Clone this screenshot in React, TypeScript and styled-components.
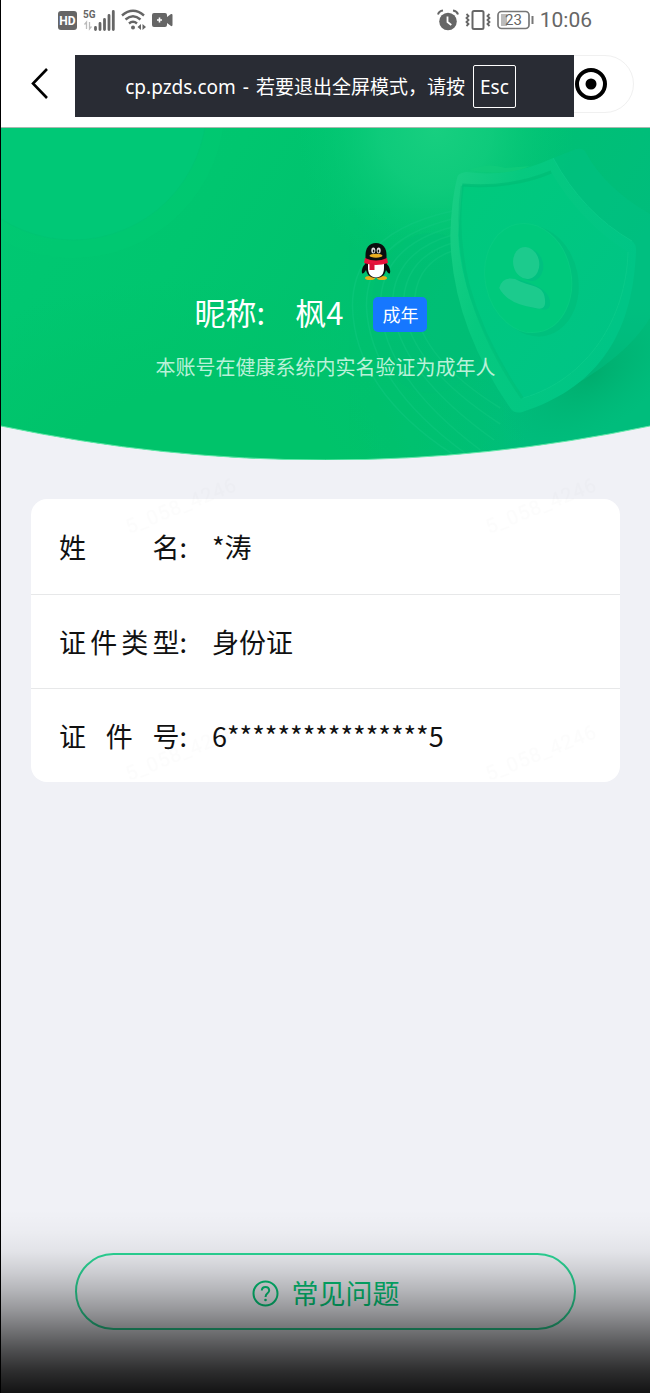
import React from "react";
import styled, { createGlobalStyle } from "styled-components";

const GlobalStyle = createGlobalStyle`
  * { box-sizing: border-box; }
  body {
    margin: 0;
    background: #f0f1f6;
    font-family: "Noto Sans CJK SC", sans-serif;
    color: #111;
  }
  button { font-family: inherit; }
`;

const Page = styled.div`
  position: relative;
  display: flex;
  flex-direction: column;
  min-height: 100vh;
  border-left: 1px solid #000;
  background: #f0f1f6;
`;

const StatusBar = styled.div`
  display: flex;
  justify-content: space-between;
  align-items: center;
  height: 40px;
  padding: 0 58px 0 57px;
  background: #fff;
  color: #666;
`;

const StatusGroup = styled.div`
  display: flex;
  align-items: center;
  gap: 6px;
`;

const Clock = styled.time`
  font: 400 21px/24px Roboto, sans-serif;
`;

const NavBar = styled.header`
  position: relative;
  display: flex;
  justify-content: space-between;
  align-items: center;
  height: 88px;
  padding: 1px 16px 0 24px;
  background: #fff;
  border-bottom: 1px solid #a9b8b0;
`;

const IconButton = styled.button`
  display: flex;
  align-items: center;
  justify-content: center;
  padding: 0;
  border: 0;
  background: none;
  cursor: pointer;
`;

const Capsule = styled.div`
  display: grid;
  grid-template-columns: 1fr 1fr;
  width: 172px;
  height: 58px;
  border: 1px solid #f0f0f0;
  border-radius: 29px;
`;

const FullscreenNotice = styled.div`
  position: absolute;
  top: 15px;
  left: 74px;
  right: 76px;
  display: flex;
  align-items: center;
  justify-content: center;
  gap: 8px;
  height: 62px;
  padding-right: 8px;
  background: #292c34;
  color: #fff;
  font: 400 19px/28px "Noto Sans", "Noto Sans CJK SC", sans-serif;
  white-space: nowrap;
`;

const NoticeText = styled.span`
  display: flex;
  gap: 7px;
  padding-top: 2px;
`;

const Key = styled.kbd`
  padding: 7px 6px 6px;
  border: 1px solid #fff;
  border-radius: 2px;
  font: inherit;
`;

const Hero = styled.section`
  position: relative;
  height: 332px;
`;

const HeroArt = styled.svg`
  position: absolute;
  inset: 0;
  width: 100%;
  height: 100%;
`;

const HeroContent = styled.div`
  position: relative;
  display: flex;
  flex-direction: column;
  align-items: center;
  padding-top: 114px;
  color: #fff;
`;

const Avatar = styled.div`
  height: 48px;
  padding-left: 100px;
`;

const NicknameRow = styled.div`
  display: flex;
  align-items: center;
  gap: 30px;
  height: 48px;
  padding-right: 29px;
`;

const Nickname = styled.h1`
  display: flex;
  gap: 30px;
  margin: 0;
  padding-bottom: 4px;
  font-size: 31px;
  font-weight: 400;
  line-height: 44px;
`;

const Badge = styled.span`
  padding: 0 9px;
  border-radius: 5px;
  background: #1677ff;
  font-size: 18px;
  line-height: 35px;
`;

const Description = styled.p`
  margin: 14px 0 0;
  color: #b9f1d8;
  font-size: 20px;
  line-height: 30px;
`;

const InfoCard = styled.dl`
  margin: 39px 30px 40px;
  padding-top: 1px;
  border-radius: 16px;
  background: #fff;
`;

const InfoRow = styled.div`
  display: flex;
  align-items: center;
  height: 94px;
  padding: 0 28px;
  font-size: 27px;
  line-height: 40px;

  & + & {
    border-top: 1px solid #e7e8e9;
  }
`;

const InfoLabel = styled.dt`
  display: flex;
  width: 128px;
`;

const Spread = styled.span`
  display: flex;
  flex: 1;
  justify-content: space-between;
`;

const InfoValue = styled.dd`
  margin: 0 0 0 25px;
`;

const Footer = styled.footer`
  margin-top: auto;
  padding: 0 74px 63px;
`;

const HelpButton = styled.button`
  display: flex;
  align-items: center;
  justify-content: center;
  gap: 13px;
  width: 100%;
  height: 77px;
  padding: 3px 0 0;
  border: 2px solid #2bd897;
  border-radius: 39px;
  background: none;
  color: #04c678;
  font-size: 27px;
  line-height: 40px;
  cursor: pointer;
`;

const Shade = styled.div`
  position: absolute;
  left: 0;
  right: 0;
  bottom: 0;
  height: 183px;
  pointer-events: none;
  background: linear-gradient(
    to bottom,
    rgba(0, 0, 0, 0) 0%,
    rgba(0, 0, 0, 0.02) 12%,
    rgba(0, 0, 0, 0.06) 23%,
    rgba(0, 0, 0, 0.15) 34%,
    rgba(0, 0, 0, 0.25) 44%,
    rgba(0, 0, 0, 0.38) 55%,
    rgba(0, 0, 0, 0.53) 66%,
    rgba(0, 0, 0, 0.68) 77%,
    rgba(0, 0, 0, 0.81) 88%,
    rgba(0, 0, 0, 0.92) 100%
  );
`;

const Watermark = styled.svg`
  position: absolute;
  inset: 0;
  width: 100%;
  height: 100%;
  pointer-events: none;
`;

const HdIcon = () => (
  <svg width="19" height="20" viewBox="0 0 19 20">
    <rect width="19" height="19" y="1" rx="3" fill="#666" />
    <text x="9.5" y="15" fontSize="12" fontWeight="700" fontFamily="Roboto, sans-serif" textAnchor="middle" fill="#fff">HD</text>
  </svg>
);

const SignalIcon = () => (
  <svg width="32" height="22" viewBox="0 0 32 22">
    <text x="0" y="9" fontSize="10" fontWeight="700" fontFamily="Roboto, sans-serif" fill="#666">5G</text>
    <path d="M3.500 20v-7l-2 2.500M6.500 13v7l2-2.500" fill="none" stroke="#bbb" strokeWidth="1.300" />
    <path d="M12.500 20.500v-2M17 20.500v-6M21.500 20.500V10.500M26 20.500V6.500M30.300 20.500V2.500" stroke="#666" strokeWidth="2.800" strokeLinecap="round" />
  </svg>
);

const WifiIcon = () => (
  <svg width="25" height="22" viewBox="0 0 25 22">
    <g fill="none" stroke="#666" strokeWidth="2.400">
      <path d="M1 6.500Q12 -3 23 6.500" />
      <path d="M4.500 10.500Q12 4 19.500 10.500" />
      <path d="M8 14.500Q12 11 16 14.500" />
    </g>
    <circle cx="12" cy="18.500" r="2" fill="#666" />
    <path d="M20 15v6l-3.500-3zM21.500 15v6l3.500-3z" fill="#666" />
  </svg>
);

const CameraIcon = () => (
  <svg width="21" height="14" viewBox="0 0 21 14">
    <path d="M2 0h11q2 0 2 2v2l4-3q1.500-.5 1.500 1v10q0 1.500-1.500 1l-4-3v2q0 2-2 2H2q-2 0-2-2V2Q0 0 2 0z" fill="#666" />
    <path d="M5 7h5M7.500 4.500v5" stroke="#fff" strokeWidth="1.600" />
  </svg>
);

const AlarmIcon = () => (
  <svg width="22" height="22" viewBox="0 0 22 22">
    <circle cx="11" cy="12.500" r="8.800" fill="#666" />
    <path d="M1 5.500Q2 2 6 1.500M21 5.500Q20 2 16 1.500" fill="none" stroke="#666" strokeWidth="2" />
    <path d="M10.500 7.500v5.500l3.800 3" fill="none" stroke="#fff" strokeWidth="1.800" />
  </svg>
);

const VibrateIcon = () => (
  <svg width="26" height="20" viewBox="0 0 26 20">
    <rect x="7.500" y="1" width="11" height="18" rx="1.500" fill="none" stroke="#666" strokeWidth="2" />
    <path d="M1.500 4l2 2-2 2 2 2-2 2 2 2-2 2M24.500 4l-2 2 2 2-2 2 2 2-2 2 2 2" fill="none" stroke="#666" strokeWidth="1.800" />
  </svg>
);

const BatteryIcon = () => (
  <svg width="37" height="20" viewBox="0 0 37 20">
    <rect x="1" y="1.500" width="31" height="17" rx="3.500" fill="none" stroke="#777" strokeWidth="1.700" />
    <path d="M4 4h6v12H4z" fill="#bbb" />
    <path d="M35.500 6v8" stroke="#777" strokeWidth="2" />
    <text x="16.500" y="15" fontSize="15" fontFamily="Roboto, sans-serif" textAnchor="middle" fill="#666">23</text>
  </svg>
);

const Penguin = () => (
  <svg width="30" height="38" viewBox="0 0 30 38">
    <path d="M5 21Q0 26 1 31q1 2 4-3zM25 21q5 5 4 10-1 2-4-3z" fill="#080c0b" />
    <ellipse cx="9" cy="36" rx="5" ry="2" fill="#e8b21c" />
    <ellipse cx="21" cy="36" rx="5" ry="2" fill="#e8b21c" />
    <path d="M15 1C8 1 4.500 6 4.500 13v10c0 9 4 13 10.500 13s10.500-4 10.500-13V13C25.500 6 22 1 15 1z" fill="#0b0e0e" />
    <path d="M7 21h16v5c0 6-3 9.500-8 9.500S7 32 7 26z" fill="#fff" />
    <ellipse cx="12.300" cy="8.500" rx="2" ry="3" fill="#ddd" />
    <ellipse cx="17.700" cy="8.500" rx="2" ry="3" fill="#ddd" />
    <ellipse cx="12.600" cy="9" rx="0.800" ry="1.500" fill="#111" />
    <ellipse cx="17.400" cy="9" rx="0.800" ry="1.500" fill="#111" />
    <ellipse cx="15" cy="13.700" rx="6.500" ry="2" fill="#e9ae20" />
    <path d="M4 16q11 5 22 0l1 5Q15 25 3 21z" fill="#e7143d" />
    <path d="M8.500 21.500h5V28h-5z" fill="#d91139" />
  </svg>
);

const HeroBackground = () => (
  <HeroArt viewBox="0 0 650 332" preserveAspectRatio="none" aria-hidden="true">
    <defs>
      <clipPath id="arc"><path d="M0 0H650V298Q325 366 0 298Z" /></clipPath>
      <linearGradient id="base" x1="0" y1="0" x2="1" y2="0.300">
        <stop offset="0" stopColor="#00c873" />
        <stop offset="0.350" stopColor="#00c66f" />
        <stop offset="0.580" stopColor="#00c26e" />
        <stop offset="1" stopColor="#00bd7c" />
      </linearGradient>
      <radialGradient id="glow">
        <stop offset="0" stopColor="#18cf80" />
        <stop offset="0.400" stopColor="#12cd7e" stopOpacity="0.800" />
        <stop offset="1" stopColor="#00c974" stopOpacity="0" />
      </radialGradient>
      <radialGradient id="dark">
        <stop offset="0" stopColor="#00a96a" stopOpacity="0.800" />
        <stop offset="1" stopColor="#00b575" stopOpacity="0" />
      </radialGradient>
      <radialGradient id="low">
        <stop offset="0.400" stopColor="#00c36a" />
        <stop offset="1" stopColor="#00c36a" stopOpacity="0" />
      </radialGradient>
      <linearGradient id="rim" x1="0" y1="0" x2="1" y2="0.400">
        <stop offset="0" stopColor="#1ccf85" />
        <stop offset="0.350" stopColor="#06c97f" />
        <stop offset="1" stopColor="#00c586" />
      </linearGradient>
      <linearGradient id="face" x1="0" y1="0" x2="1" y2="1">
        <stop offset="0" stopColor="#00ca7c" />
        <stop offset="1" stopColor="#00c387" />
      </linearGradient>
    </defs>
    <g clipPath="url(#arc)">
      <rect width="650" height="332" fill="url(#base)" />
      <circle cx="72" cy="-22" r="152" fill="#00cb72" opacity="0.400" />
      <circle cx="72" cy="-22" r="134" fill="#00c876" stroke="#00c573" />
      <ellipse cx="200" cy="340" rx="330" ry="190" fill="url(#low)" />
      <ellipse cx="435" cy="0" rx="140" ry="150" fill="url(#glow)" />
      <ellipse cx="430" cy="185" rx="60" ry="80" fill="#00bd78" opacity="0.250" />
      <g fill="none" stroke="#12c981" strokeWidth="1.500" opacity="0.450">
        <path d="M452 83Q352 105 352 178Q354 262 452 326" />
        <path d="M452 91Q366 112 366 178Q369 256 466 326" />
        <path d="M452 99Q380 118 380 178Q384 250 480 322" />
        <path d="M452 107Q392 124 392 178Q398 244 494 312" />
        <path d="M452 115Q403 130 403 178Q410 238 500 296" />
        <path d="M452 123Q414 136 414 178Q422 232 500 280" />
      </g>
      <ellipse cx="592" cy="246" rx="105" ry="55" transform="rotate(-35 592 246)" fill="url(#dark)" />
      <path d="M553 30L576 21Q583 19 586 25Q605 60 650 86V190Q620 240 522 284L480 220z" fill="#00c486" opacity="0.400" />
      <path d="M457 49Q458 45 466 44Q510 50 553 30Q583 85 632 113Q636 116 636 122C633 210 594 261 522 284Q514 286 510 280Q451 195 450 107Q451 72 457 49z" fill="url(#rim)" />
      <path d="M468 42Q490 34 505 40L530 38Q505 49 468 42z" fill="#11cc7b" opacity="0.700" />
      <path d="M462 57Q510 61 551 44Q581 95 628 124C626 190 588 251 523 270Q460 180 458 107z" fill="url(#face)" />
      <path d="M462 57Q510 61 551 44" fill="none" stroke="#00bc75" strokeWidth="3" opacity="0.700" />
      <path d="M462 58Q455 105 468 158Q484 215 522 270" fill="none" stroke="#00bb76" strokeWidth="3" opacity="0.450" />
      <path d="M553 30Q583 85 632 113M628 124C626 190 588 251 523 270" fill="none" stroke="#13cf8f" strokeWidth="1" opacity="0.500" />
      <ellipse cx="534" cy="153" rx="44" ry="56" transform="rotate(-12 534 153)" fill="#00bd7b" opacity="0.700" />
      <ellipse cx="528" cy="150" rx="43" ry="55" transform="rotate(-12 528 150)" fill="#00c97c" stroke="#06cb81" />
      <g fill="#00c180">
        <ellipse cx="530" cy="137" rx="13" ry="16" transform="rotate(-12 530 137)" />
        <path d="M504 161Q507 149 520 152Q550 160 550 175Q550 184 540 181Q512 177 504 161z" />
      </g>
      <g fill="#1ccb8d">
        <ellipse cx="526" cy="135" rx="13" ry="16" transform="rotate(-12 526 135)" />
        <path d="M499 160Q502 148 515 151C530 160 545 155 545 174Q545 183 535 180Q507 176 499 160z" />
      </g>
    </g>
    <path d="M0 298Q325 366 650 298" fill="none" stroke="#63e8aa" strokeWidth="1" />
  </HeroArt>
);

const QuestionIcon = () => (
  <svg width="27" height="27" viewBox="0 0 27 27" fill="none" stroke="currentColor" strokeWidth="2">
    <circle cx="13.500" cy="13.500" r="12" />
    <path d="M9.800 10.500Q10 7 13.500 7T17.200 10.300Q17.200 12 15.500 13.300T13.500 17" />
    <circle cx="13.500" cy="20" r="1.300" fill="currentColor" stroke="none" />
  </svg>
);

const details = [
  { label: "姓名", value: "*涛" },
  { label: "证件类型", value: "身份证" },
  { label: "证件号", value: "6****************5" },
];

export default function App() {
  return (
    <>
      <GlobalStyle />
      <Page lang="zh-CN">
        <StatusBar>
          <StatusGroup>
            <HdIcon />
            <SignalIcon />
            <WifiIcon />
            <CameraIcon />
          </StatusGroup>
          <StatusGroup>
            <AlarmIcon />
            <VibrateIcon />
            <BatteryIcon />
            <Clock>10:06</Clock>
          </StatusGroup>
        </StatusBar>
        <NavBar>
          <IconButton aria-label="返回">
            <svg width="30" height="32" viewBox="0 0 30 32" fill="none" stroke="#000" strokeWidth="2.600">
              <path d="M22 1L8 15.500L22 30" />
            </svg>
          </IconButton>
          <Capsule>
            <IconButton aria-label="更多">
              <svg width="32" height="10" viewBox="0 0 32 10">
                <circle cx="5" cy="5" r="3" />
                <circle cx="16" cy="5" r="5" />
                <circle cx="27" cy="5" r="3" />
              </svg>
            </IconButton>
            <IconButton aria-label="关闭">
              <svg width="34" height="34" viewBox="0 0 34 34">
                <circle cx="17" cy="17" r="14" fill="none" stroke="#000" strokeWidth="4" />
                <circle cx="17" cy="17" r="5.500" />
              </svg>
            </IconButton>
          </Capsule>
          <FullscreenNotice role="status">
            <NoticeText>
              <span>cp.pzds.com</span>
              <span>-</span>
              <span>若要退出全屏模式，请按</span>
            </NoticeText>
            <Key>Esc</Key>
          </FullscreenNotice>
        </NavBar>
        <Hero>
          <HeroBackground />
          <HeroContent>
            <Avatar><Penguin /></Avatar>
            <NicknameRow>
              <Nickname>
                <span>昵称:</span>
                <span>枫4</span>
              </Nickname>
              <Badge>成年</Badge>
            </NicknameRow>
            <Description>本账号在健康系统内实名验证为成年人</Description>
          </HeroContent>
        </Hero>
        <InfoCard>
          {details.map(({ label, value }) => (
            <InfoRow key={label}>
              <InfoLabel>
                <Spread>
                  {[...label].map((char) => <span key={char}>{char}</span>)}
                </Spread>
                :
              </InfoLabel>
              <InfoValue>{value}</InfoValue>
            </InfoRow>
          ))}
        </InfoCard>
        <Footer>
          <HelpButton>
            <QuestionIcon />
            常见问题
          </HelpButton>
        </Footer>
        <Watermark aria-hidden="true">
          <defs>
            <pattern id="mark" x="104" y="470" width="360" height="247" patternUnits="userSpaceOnUse">
              <text x="24" y="64" fontSize="20" fontFamily="Roboto, sans-serif" letterSpacing="1" fill="#000" opacity="0.012" transform="rotate(-22 24 64)">5_058_4246</text>
            </pattern>
          </defs>
          <rect y="470" width="100%" height="320" fill="url(#mark)" />
        </Watermark>
        <Shade />
      </Page>
    </>
  );
}
